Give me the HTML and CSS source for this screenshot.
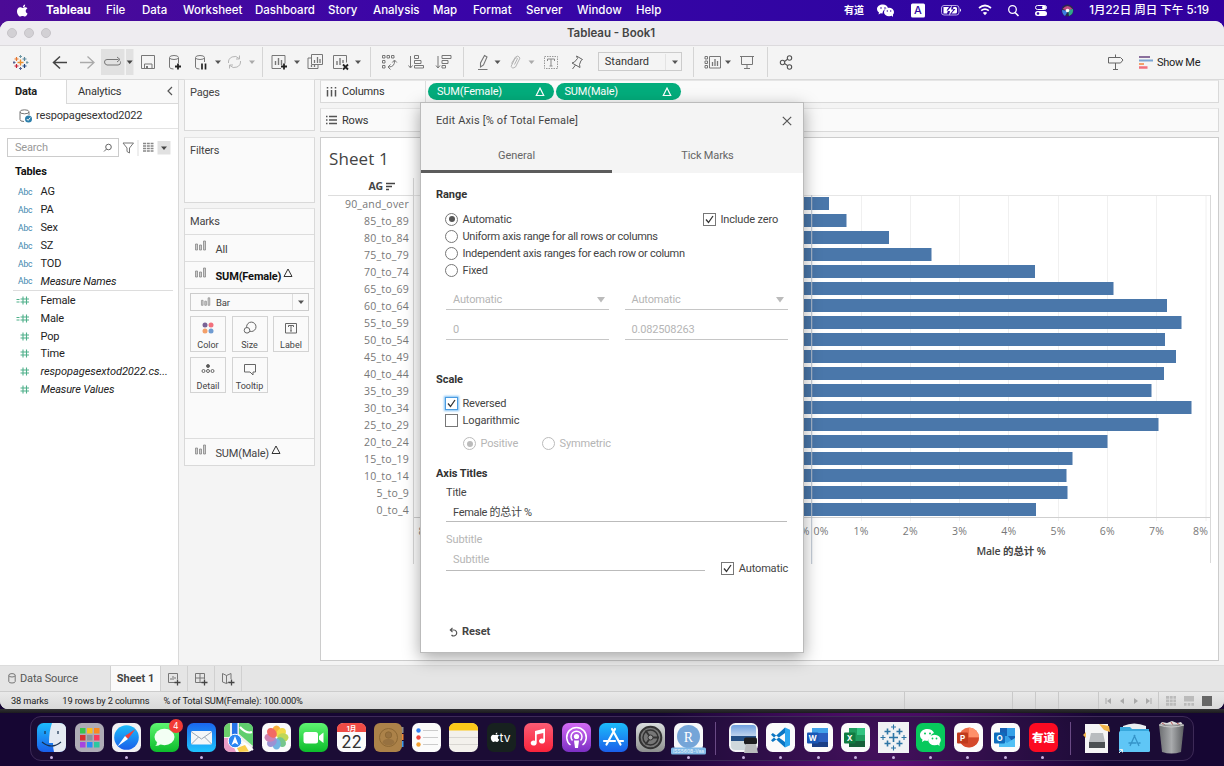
FILE: index.html
```html
<!DOCTYPE html>
<html lang="zh">
<head>
<meta charset="utf-8">
<title>Tableau - Book1</title>
<link rel="stylesheet" href="styles.css">
</head>
<body>
<svg class="defs" width="0" height="0">
  <defs>
    <path id="caret" d="M-3 -1.5h6l-3 3.5z"/>
    <g id="plus" stroke="#222" stroke-width="1.8"><path d="M-3 0h6M0 -3v6"/></g>
    <g id="bars" fill="#ccc" stroke="#888" stroke-width=".8"><path d="M.5 4h2v6h-2zM4.5 5h2v5h-2zM8.500 1h2v9h-2z"/></g>
    <g id="hash" stroke="#4fb08a" stroke-width="1.1" fill="none"><path d="M3 .5v8M6.500 .5v8M.5 3h8.500M.5 6h8.500"/></g>
    <path id="apple" d="M8.200 3c.8-.8 1-1.700 .9-2.500-1 .1-2 .9-2.200 2.400M9 3.300c-1 0-1.700.6-2.400.6S5 3.300 4.100 3.300C2.300 3.400 1 5 1 7.200 1 9.700 2.700 12.500 4.100 12.500c.9 0 1.300-.6 2.400-.6s1.400.6 2.400.6c1.200 0 2.300-2 2.600-3.100-2.300-1-2.300-3.900-.1-5C10.800 3.600 10 3.300 9 3.300z"/>
    <linearGradient id="gGray" x2="0" y2="1"><stop stop-color="#d9dddd"/><stop offset="1" stop-color="#8d8f8e"/></linearGradient>
    <linearGradient id="gBlue" x2="0" y2="1"><stop stop-color="#1cbcfb"/><stop offset="1" stop-color="#1a5fea"/></linearGradient>
    <linearGradient id="gMail" x2="0" y2="1"><stop stop-color="#1b66ee"/><stop offset="1" stop-color="#1fc4fd"/></linearGradient>
    <linearGradient id="gGreen" x2="0" y2="1"><stop stop-color="#5ef571"/><stop offset="1" stop-color="#0cbc2b"/></linearGradient>
    <linearGradient id="gRed" x2="0" y2="1"><stop stop-color="#fb5c74"/><stop offset="1" stop-color="#fa233b"/></linearGradient>
    <linearGradient id="gPurple" x2="0" y2="1"><stop stop-color="#d36bf5"/><stop offset="1" stop-color="#7c2fc4"/></linearGradient>
    <linearGradient id="gTrash" x2="1" y2="0"><stop stop-color="#6d6f72"/><stop offset=".5" stop-color="#a9abad"/><stop offset="1" stop-color="#5b5d60"/></linearGradient>
    <linearGradient id="gSky" x2="0" y2="1"><stop stop-color="#6f9fe0"/><stop offset="1" stop-color="#d5e2f1"/></linearGradient>
  </defs>
</svg>

<header class="menubar">
  <nav class="menus">
    <svg class="apple" width="13" height="13" fill="#fff"><use href="#apple"/></svg>
    <b class="m1">Tableau</b><span class="m2">File</span><span class="m3">Data</span><span class="m4">Worksheet</span><span class="m5">Dashboard</span><span class="m6">Story</span><span class="m7">Analysis</span><span class="m8">Map</span><span class="m9">Format</span><span class="m10">Server</span><span class="m11">Window</span><span class="m12">Help</span>
  </nav>
  <div class="tray">
    <b class="youdao">有道</b>
    <svg class="trayicons" width="220" height="20" viewBox="870 0 220 20" fill="#fff">
      <path d="M883 4.500c-3.500 0-6 2-6 4.500 0 1.500.8 2.600 2 3.400l-.5 2 2.200-1.200 1.900.3c0-3 2.400-5 5.600-5C887.500 6 885.500 4.500 883 4.500z"/><ellipse cx="889" cy="12" rx="5" ry="4.300"/><path d="M891 15l2 2v-3z"/><g fill="#3406a4"><circle cx="881" cy="8" r=".8"/><circle cx="885" cy="8" r=".8"/><circle cx="887.300" cy="11" r=".7"/><circle cx="890.700" cy="11" r=".7"/></g>
      <rect x="911" y="3.500" width="14" height="14" rx="1.500"/><text x="918" y="14.300" text-anchor="middle" font-size="11" fill="#3406a4">A</text>
      <rect x="941.500" y="5.500" width="17.500" height="9.500" rx="2.500" fill="none" stroke="#b9a8e5"/><path d="M943.500 7h5.500l-2.500 3.500h1.500l-1 3h-3.500zM953.500 7h2q1.500 0 1.500 1.500v3.500q0 1.500-1.500 1.500h-4l4-4.500h-2.500zM952 5.500l-4.500 5.500h2.500l-1 4.500 4.500-6h-2.500zM960 8.500q2 1.500 0 3.500z"/>
      <g fill="none" stroke="#fff" stroke-width="1.700"><path d="M979 8q6-5 12 0M981.200 10.700q3.800-3 7.600 0"/></g><path d="M982.800 12.800q2.200-1.600 4.400 0L985 15.200z"/>
      <circle cx="1012.500" cy="9.500" r="3.800" fill="none" stroke="#fff" stroke-width="1.300"/><path d="M1015 12.500l3.500 3.500" stroke="#fff" stroke-width="1.600"/>
      <rect x="1035.500" y="5.500" width="11" height="4" rx="2" fill="none" stroke="#fff"/><circle cx="1044" cy="7.500" r="2"/><rect x="1035" y="11" width="12" height="5" rx="2.500"/><circle cx="1038" cy="13.500" r="1.300" fill="#3406a4"/>
      <circle cx="1067.500" cy="10.500" r="6" fill="#29294e"/><path d="M1062.500 9q5-6 10 0l-4 2z" fill="#c04a84"/><path d="M1062 10l6 1-3 5q-3-2-3-6z" fill="#3c7de0"/><path d="M1068 10l5-1q1 5-4 7z" fill="#31a58b"/><circle cx="1067.500" cy="10.500" r="1.800" fill="#fff"/>
    </svg>
    <span class="clock">1月22日 周日 下午 5:19</span>
  </div>
</header>

<div class="window">
  <div class="titlebar"><i></i><i></i><i></i><b>Tableau - Book1</b></div>

  <div class="toolbar">
    <svg class="tg" width="40" height="30" viewBox="0 47 40 30" fill="none" stroke-width="1.400">
      <path d="M20.500 59.500v6M17.500 62.500h6" stroke="#eb8f2d"/><path d="M16.500 64v4M14.500 66h4" stroke="#c72035" stroke-width="1.200"/><path d="M24.500 57v4M22.500 59h4" stroke="#59879b" stroke-width="1.200"/><path d="M16.500 57v4M14.500 59h4" stroke="#e8762b" stroke-width="1.200"/><path d="M24.500 64v4M22.500 66h4" stroke="#1f447e" stroke-width="1.200"/><path d="M20.500 55v3M19 56.500h3M26 62.500h2.500M27 61v3" stroke="#7099a5" stroke-width="1"/><path d="M20.500 67v3M19 68.500h3M13 62.500h2.500M14 61v3" stroke="#5b6591" stroke-width="1"/>
    </svg>
    <svg class="tg sep" width="222" height="30" viewBox="41 47 222 30" fill="none" stroke="#777">
      <rect x="101" y="49" width="23.500" height="26" fill="#e1e1e1" stroke="none"/><rect x="126" y="49" width="7.500" height="26" fill="#e1e1e1" stroke="none"/>
      <path d="M67 62.500H54M60 56.500l-6.500 6 6.500 6" stroke="#444" stroke-width="1.500"/>
      <path d="M80 62.500h13M87.500 56.500l6.500 6-6.500 6" stroke="#aaa" stroke-width="1.300"/>
      <path d="M118.500 59.500h-11.500q-2.500 0-2.500 2.500t2.500 3h11q2.500 0 2.500-2.500v-1M117 57l3 2.500-3 2.500" stroke="#777"/>
      <use href="#caret" x="129.700" y="62" fill="#444" stroke="none"/>
      <path d="M141.500 55.500h13v13h-13zM144.500 68.500v-4.500h7.500v4.500"/><path d="M146 66h2v2.500h-2z" fill="#777" stroke="none"/>
      <path d="M169.500 58v9q0 2 4 2M178.500 58v5"/><ellipse cx="174" cy="57.500" rx="4.500" ry="2"/><use href="#plus" x="178" y="66.500"/>
      <path d="M195.500 58v9q0 2 4 2M204.500 58v4"/><ellipse cx="200" cy="57.500" rx="4.500" ry="2"/><path d="M202 63.500v6M205.500 63.500v6" stroke="#222" stroke-width="1.700"/>
      <use href="#caret" x="218" y="62" fill="#555" stroke="none"/>
      <path d="M228.500 63a6 6 0 0 1 10.500-4.500M240.500 61a6 6 0 0 1-10.500 4.500M239.500 55.500v3.500h-3.500M229.500 68.500v-3.500h3.500" stroke="#b5b5b5"/>
      <use href="#caret" x="252" y="62" fill="#aaa" stroke="none"/>
    </svg>
    <svg class="tg sep" width="107" height="30" viewBox="264 47 107 30" fill="none" stroke="#777">
      <path d="M282 68.500h-9v-13h13v8"/><path d="M276.500 61v4M279.500 58v7M282.500 60v5" stroke-width="1.400"/><use href="#plus" x="285" y="66.500"/>
      <use href="#caret" x="298" y="62" fill="#555" stroke="none"/>
      <path d="M312.500 54.500h11v10h-11zM312 58h-3v10.500h10V65"/><path d="M315.500 60v3M318.500 57v6M321 59v4M312.500 65v2M315.500 65v2" stroke-width="1.300"/>
      <path d="M343 68.500h-8.500v-13h13v7"/><path d="M338 61v4M341 58v7M344 60v3" stroke-width="1.400"/><path d="M344 64.500l5 5M349 64.500l-5 5" stroke="#222" stroke-width="1.800"/>
      <use href="#caret" x="359" y="62" fill="#555" stroke="none"/>
    </svg>
    <svg class="tg sep" width="92" height="30" viewBox="371 47 92 30" fill="none" stroke="#777">
      <path d="M382.500 55.500h2.500v2.500h-2.500zM387 55.500h2.500v2.500H387zM391.500 55.500h2.500v2.500h-2.500zM382.500 60.500h2.500v2.500h-2.500zM382.500 65.500h2.500v2.500h-2.500zM394.500 60.500q.5 6.500-6 6.500M392.300 62.500l2.200-2.500 2.300 2.500M390.500 64.500l-2.500 2.500 2.500 2.500" stroke-width="1"/>
      <path d="M410.500 56v11.500M408.500 65.500l2 2.500 2-2.500M414.500 55.500h4v3h-4zM414.500 60.500h6.500v3h-6.500zM414.500 65.500h9v2.500h-9z"/>
      <path d="M438 56v11.500M436 65.500l2 2.500 2-2.500M442 55.500h9v3h-9zM442 60.500h6v3h-6zM442 65.500h3.500v2.500h-3.500z"/>
    </svg>
    <svg class="tg sep" width="134" height="30" viewBox="464 47 134 30" fill="none" stroke="#777">
      <path d="M484.500 55.500l2.500 1.500-3.500 8-3 2v-4zM478 69.500h9.500" stroke-width="1.100"/><use href="#caret" x="497.500" y="62" fill="#555" stroke="none"/>
      <path d="M511.500 63.500l4-6.500q2.500-2.500 4.500 1l-4.500 9q-3 2.500-4.500-.5l4-8q1.500-1.500 2.500 0l-3 6" stroke="#b5b5b5"/><use href="#caret" x="531.500" y="62" fill="#aaa" stroke="none"/>
      <rect x="544.500" y="56.500" width="13" height="12" stroke="#999" stroke-dasharray="1.500 1"/><path d="M547.500 61v-2h7v2M551 59v7M549.500 66h3" stroke="#888"/>
      <path d="M576.500 56l6 3.500-1.500 1-1.500 4 .5 3-8-4.500 2.500-1 3-3.500zM575.500 65l-3 4" stroke="#666"/>
    </svg>
    <div class="fit"><span>Standard</span><svg width="16" height="16"><use href="#caret" x="9" y="8" fill="#555"/></svg></div>
    <svg class="tg sep g6" width="73" height="30" viewBox="695 47 73 30" fill="none" stroke="#777">
      <path d="M706 56.500h2.500v2.500H706zM706 61h2.500v2.500H706zM706 65.500h2.500v2.500H706zM710.500 56.500h11v11.500h-11z"/><path d="M713.500 62v4M716 59v7M718.500 61v5" stroke-width="1.300"/><use href="#caret" x="729" y="62" fill="#555" stroke="none"/>
      <path d="M741 56.500h14M742.500 56.500v8h11v-8M748 64.500v4M745 68.500h6" />
    </svg>
    <svg class="tg sep" width="40" height="30" viewBox="769 47 40 30" fill="none" stroke="#555" stroke-width="1.100">
      <circle cx="783.500" cy="62.500" r="2.200"/><circle cx="790.500" cy="58" r="2.200"/><circle cx="790.500" cy="67" r="2.200"/><path d="M785.500 61.500l3-2.200M785.500 63.500l3 2"/>
    </svg>
    <svg class="showicons" width="50" height="30" viewBox="1105 47 50 30" fill="none" stroke="#666">
      <path d="M1108.500 57.500h12l2.500 2.500-2.500 3h-12zM1115.500 54.500v3M1115.500 63v6.500M1113 69.500h5"/>
      <path d="M1139 57h11" stroke="#8a6f9c" stroke-width="2"/><path d="M1139 60.500h14" stroke="#7ca5d2" stroke-width="2"/><path d="M1139 64h5" stroke="#f3a06a" stroke-width="2"/><path d="M1139 67.500h8.500" stroke="#f2707c" stroke-width="2.500"/>
    </svg>
    <span class="showme">Show Me</span>
  </div>

  <div class="work">
    <aside class="data">
      <div class="dtabs"><b>Data</b><div><span>Analytics</span><svg width="8" height="10" fill="none" stroke="#555" stroke-width="1.200"><path d="M6 1L2 5l4 4"/></svg></div></div>
      <div class="source"><svg width="14" height="14" fill="none" stroke="#777"><ellipse cx="5.500" cy="2.800" rx="4.500" ry="2"/><path d="M1 3v7.500q0 2 4 2M10 3v3"/><circle cx="9.500" cy="10" r="3.500" fill="#2d7fab" stroke="none"/><path d="M7.800 10l1.300 1.400 2.200-2.800" stroke="#fff"/></svg><span>respopagesextod2022</span></div>
      <div class="searchrow">
        <div class="search"><span>Search</span><svg width="10" height="10" fill="none" stroke="#666"><circle cx="5.500" cy="4" r="2.800"/><path d="M3.500 6L1 8.500"/></svg></div>
        <svg width="52" height="16" viewBox="121 139 52 16" fill="none" stroke="#777"><path d="M123 142h10.500l-4 5v5l-2.500-1.500V147z"/><path d="M138 139v16" stroke="#ddd"/><g stroke="#888" stroke-width="1.500" stroke-dasharray="3 .8"><path d="M143 142.500h10.500M143 145h10.500M143 147.500h10.500M143 150h10.500"/></g><rect x="157.500" y="140" width="13" height="13.500" fill="#e1e1e1" stroke="none"/><use href="#caret" x="164" y="147" fill="#444" stroke="none"/></svg>
      </div>
      <b class="tables">Tables</b>
      <ul class="fields">
        <li><em>Abc</em><span>AG</span></li><li><em>Abc</em><span>PA</span></li><li><em>Abc</em><span>Sex</span></li><li><em>Abc</em><span>SZ</span></li><li><em>Abc</em><span>TOD</span></li><li class="it"><em>Abc</em><span>Measure Names</span></li>
      </ul>
      <ul class="fields measures">
        <li><svg width="14" height="9"><use href="#hash" x="3"/><path d="M-.5 3.500h3M-.5 6h3" stroke="#4fb08a"/></svg><span>Female</span></li>
        <li><svg width="14" height="9"><use href="#hash" x="3"/><path d="M-.5 3.500h3M-.5 6h3" stroke="#4fb08a"/></svg><span>Male</span></li>
        <li><svg width="14" height="9"><use href="#hash" x="3"/></svg><span>Pop</span></li>
        <li><svg width="14" height="9"><use href="#hash" x="3"/></svg><span>Time</span></li>
        <li class="it"><svg width="14" height="9"><use href="#hash" x="3"/></svg><span class="full">respopagesextod2022.cs...</span></li>
        <li class="it"><svg width="14" height="9"><use href="#hash" x="3"/></svg><span>Measure Values</span></li>
      </ul>
    </aside>

    <section class="cards">
      <div class="card pages">Pages</div>
      <div class="card filters">Filters</div>
      <div class="card marks">
        <div class="mtitle">Marks</div>
        <div class="mrow"><svg width="12" height="12"><use href="#bars"/></svg><span>All</span></div>
        <div class="mrow sel"><svg width="12" height="12"><use href="#bars"/></svg><b>SUM(Female)</b><svg class="tri" width="10" height="10" fill="none" stroke="#333"><path d="M5 1l4 7.500H1z"/></svg></div>
        <div class="mark-body">
          <div class="marktype"><svg width="10" height="10" viewBox="0 0 12 12"><use href="#bars"/></svg><span>Bar</span><svg class="dd" width="16" height="16"><use href="#caret" x="8" y="8" fill="#555"/></svg></div>
          <div class="shelf">
            <div><svg width="14" height="14"><circle cx="4" cy="4" r="2.500" fill="#7a6396"/><circle cx="10" cy="4" r="2.500" fill="#f2707c"/><circle cx="4" cy="10" r="2.500" fill="#f3a06a"/><circle cx="10" cy="10" r="2.500" fill="#6f9bd1"/></svg>Color</div>
            <div><svg width="14" height="14" fill="none" stroke="#666"><circle cx="8.300" cy="5.800" r="4.700"/><circle cx="4" cy="9.300" r="2.800" fill="#fafafa"/></svg>Size</div>
            <div><svg width="14" height="14" fill="none" stroke="#666"><path d="M1.500 2.500h11v9.500h-11zM4.500 6V4.500h5V6M7 4.500V10M6 10h2"/></svg>Label</div>
            <div><svg width="14" height="14" fill="none" stroke="#666"><circle cx="7" cy="4" r="1.500" fill="#555"/><circle cx="2.500" cy="9" r="1.500"/><circle cx="7" cy="9" r="1.500"/><circle cx="11.500" cy="9" r="1.500"/></svg>Detail</div>
            <div><svg width="14" height="14" fill="none" stroke="#666"><path d="M1.500 2.500h11v7.500H10v3l-3-3H1.500z"/></svg>Tooltip</div>
          </div>
        </div>
        <div class="mrow last"><svg width="12" height="12"><use href="#bars"/></svg><span>SUM(Male)</span><svg class="tri" width="10" height="10" fill="none" stroke="#333"><path d="M5 1l4 7.500H1z"/></svg></div>
      </div>
    </section>

    <main class="view">
      <div class="rowshelf cols"><div class="sh"><svg width="11" height="10" stroke="#555" stroke-width="1.500"><path d="M1.500 0v1.500M5.500 0v1.500M9.500 0v1.500M1.500 3v6.500M5.500 3v6.500M9.500 3v6.500"/></svg><span>Columns</span></div>
        <div class="pill"><span>SUM(Female)</span><svg width="10" height="10" fill="none" stroke="#fff" stroke-width="1.200"><path d="M5 1l3.700 7.500H1.300z"/></svg></div><div class="pill"><span>SUM(Male)</span><svg width="10" height="10" fill="none" stroke="#fff" stroke-width="1.200"><path d="M5 1l3.700 7.500H1.300z"/></svg></div></div>
      <div class="rowshelf rows"><div class="sh"><svg width="11" height="10" stroke="#555" stroke-width="1.500"><path d="M0 1.500h1.500M3 1.500h8M0 5h1.500M3 5h8M0 8.500h1.500M3 8.500h8"/></svg><span>Rows</span></div></div>
      <div class="sheet">
        <h1>Sheet 1</h1>
        <div class="chart">
          <div class="ylabels">
            <div class="ag"><b>AG</b><svg width="9" height="9" stroke="#444" stroke-width="1.400"><path d="M0 1.500h9M0 4.500h6M0 7.500h3"/></svg></div>
            <p>90_and_over</p><p>85_to_89</p><p>80_to_84</p><p>75_to_79</p><p>70_to_74</p><p>65_to_69</p><p>60_to_64</p><p>55_to_59</p><p>50_to_54</p><p>45_to_49</p><p>40_to_44</p><p>35_to_39</p><p>30_to_34</p><p>25_to_29</p><p>20_to_24</p><p>15_to_19</p><p>10_to_14</p><p>5_to_9</p><p>0_to_4</p>
          </div>
          <svg class="plot" width="799" height="387" viewBox="413 178 799 387">
            <g stroke="#f0f0f0"><path d="M861.500 195v326M910.500 195v326M959.500 195v326M1008.500 195v326M1058.500 195v326M1107.500 195v326M1156.500 195v326M1206 195v326"/></g>
            <g fill="#4a77aa">
              <path d="M600 197h229v13H600zM600 214h246.500v13H600zM600 231h289v13H600zM600 248h331.500v13H600zM600 265h435v13H600zM600 282h513.500v13H600zM600 299h567v13H600zM600 316h581.500v13H600zM600 333h565v13H600zM600 350h576v13H600zM600 367h564v13H600zM600 384h551.500v13H600zM600 401h591.500v13H600zM600 418h558.500v13H600zM600 435h507.500v13H600zM600 452h472.500v13H600zM600 469h466.500v13H600zM600 486h467.500v13H600zM600 503h436v13H600z"/>
            </g>
            <path d="M413 195.500h798" stroke="#e6e6e6"/><path d="M413 517.500h798" stroke="#cfcfcf"/>
            <path d="M413.500 178v386M1210.500 195v368" stroke="#d9d9d9"/><path d="M811.700 195v369" stroke="#b9c3d0"/>
            <g class="ticks" text-anchor="middle"><text x="426" y="535">8%</text><text x="802" y="535">0%</text><text x="821" y="535">0%</text><text x="861" y="535">1%</text><text x="910.300" y="535">2%</text><text x="959.500" y="535">3%</text><text x="1008.800" y="535">4%</text><text x="1058" y="535">5%</text><text x="1107.300" y="535">6%</text><text x="1156.500" y="535">7%</text><text x="1200.500" y="535">8%</text></g>
            <text class="axt" x="1011" y="555" text-anchor="middle">Male 的总计 %</text>
          </svg>
        </div>
      </div>
    </main>
  </div>

  <footer class="tabs">
    <div class="ds"><svg width="9" height="11" fill="none" stroke="#777"><ellipse cx="4" cy="2.300" rx="3.200" ry="1.700"/><path d="M.8 2.500v6q0 1.500 3.200 1.500t3.200-1.500v-6"/></svg><span>Data Source</span></div>
    <div class="cur"><b>Sheet 1</b></div>
    <div class="nt"><svg width="14" height="14" fill="none" stroke="#777"><path d="M8 10.500H1.500v-9h9V7M4 6v2M6 4v4M8 5v2"/><path d="M7.500 10.500h6M10.500 7.500v6" stroke="#444" stroke-width="1.300"/></svg></div>
    <div class="nt"><svg width="14" height="14" fill="none" stroke="#777"><path d="M8 10.500H1.500v-9h9V7M1.500 6h9M6 1.500v9"/><path d="M7.500 10.500h6M10.500 7.500v6" stroke="#444" stroke-width="1.300"/></svg></div>
    <div class="nt"><svg width="14" height="14" fill="none" stroke="#777"><path d="M5.500 3.500v8L1.500 10V1.500zM5.500 3.500l4.500-2V7M5.500 11.500L8 10"/><path d="M7.500 10.500h6M10.500 7.500v6" stroke="#444" stroke-width="1.300"/></svg></div>
  </footer>
  <div class="status"><span>38 marks</span><span>19 rows by 2 columns</span><span>% of Total SUM(Female): 100.000%</span>
    <svg width="320" height="18" viewBox="904 691 320 18" fill="#aaa"><path d="M904.500 691v18M1012.500 691v18M1035.500 691v18M1058.500 691v18M1098.500 691v18M1158.500 691v18" stroke="#c9c9c9"/><path d="M1105.500 697h1v6h-1zM1111 697v6l-4-3zM1124 697v6l-4-3zM1134 697v6l4-3zM1146 697v6l4-3zM1150.500 697h1v6h-1z"/><path d="M1166 695h3v2.700h-3zM1169.700 695h3v2.700h-3zM1173.400 695h2.600v2.700h-2.600zM1166 698.500h3v2.700h-3zM1169.700 698.500h3v2.700h-3zM1173.400 698.500h2.600v2.700h-2.600zM1166 702h3v2.700h-3zM1169.700 702h3v2.700h-3zM1173.400 702h2.600v2.700h-2.600zM1184 695h10v5.500h-10zM1184 702h2.600v2.700H1184zM1187.700 702h2.600v2.700h-2.600zM1191.400 702h2.600v2.700h-2.600z" fill="#bbb"/><rect x="1202" y="695" width="10" height="10" fill="#666"/></svg>
  </div>
</div>

<div class="dockwrap">
  <div class="dock">
    <div class="app run"><svg viewBox="0 0 29 29"><rect width="29" height="29" rx="6.500" fill="url(#gBlue)"/><path d="M15 0h7.500Q29 0 29 6.500v16Q29 29 22.500 29H17q-1-4-1-9h-4q0-12 3-20z" fill="#e4eaf2"/><path d="M8 8v3M21 8v3M5 19q9.500 8 19 0" stroke="#18304f" stroke-width="1.200" fill="none"/></svg></div>
    <div class="app"><svg viewBox="0 0 29 29"><rect width="29" height="29" rx="6.500" fill="#aeacb6"/><path fill="#3ac44e" d="M5 5h5.500v5.500H5z"/><path fill="#fbbd1b" d="M12 5h5.500v5.500H12z"/><path fill="#fb8a20" d="M19 5h5.500v5.500H19z"/><path fill="#d8302f" d="M5 12h5.500v5.500H5z"/><path fill="#8e9298" d="M12 12h5.500v5.500H12z"/><path fill="#fb3a5e" d="M19 12h5.500v5.500H19z"/><path fill="#a544e0" d="M5 19h5.500v5.500H5z"/><path fill="#2b8ef5" d="M12 19h5.500v5.500H12z"/><path fill="#2cc8a0" d="M19 19h5.500v5.500H19z"/></svg></div>
    <div class="app run"><svg viewBox="0 0 29 29"><rect width="29" height="29" rx="6.500" fill="#f1f1f3"/><circle cx="14.500" cy="14.500" r="12.300" fill="url(#gBlue)"/><path d="M23.500 6L13 13l3 3z" fill="#f3403b"/><path d="M5.500 23.500L13 13l3 3z" fill="#fff"/></svg></div>
    <div class="app"><svg viewBox="0 0 29 29"><rect width="29" height="29" rx="6.500" fill="url(#gGreen)"/><ellipse cx="14.500" cy="14" rx="10" ry="8.300" fill="#f3fff4"/><path d="M7 19q0 3-2 4 4 0 6-2z" fill="#f3fff4"/></svg><span class="badge">4</span></div>
    <div class="app run"><svg viewBox="0 0 29 29"><rect width="29" height="29" rx="6.500" fill="url(#gMail)"/><rect x="4" y="8" width="21" height="13.500" rx="1.500" fill="#f4f6f8"/><path d="M4.500 9l10 7 10-7M4.500 21l7-7M24.500 21l-7-7" stroke="#9aa6b5" fill="none"/></svg></div>
    <div class="app"><svg viewBox="0 0 29 29"><rect width="29" height="29" rx="6.500" fill="#eef0ea"/><path d="M0 15v7.500Q0 29 6.500 29H12V15z" fill="#e99bc5"/><path d="M8 0h6v14l15 12q-2 3-6.500 3H12L8 20z" fill="#fbfbfb"/><path d="M19 0h3.500Q29 0 29 6.500V23L15 11V0z" fill="#5fce6e"/><path d="M0 6.500Q0 1 6 0v14H0z" fill="#6bcf6a"/><path d="M8 0h5.500v15H8z" fill="#2672e8"/><path d="M20 20l9 7M16 4q6 7 12 5" stroke="#fff" stroke-width="2" fill="none"/><path d="M15 29l-2-4 8-3 4 6.500z" fill="#f9cd4a"/><circle cx="11" cy="18" r="6.800" fill="#2b86f2" stroke="#fff"/><path d="M11 13l3.500 9-3.500-2-3.500 2z" fill="#fff"/></svg></div>
    <div class="app"><svg viewBox="0 0 29 29"><rect width="29" height="29" rx="6.500" fill="#fbfbfb"/><g opacity=".85"><ellipse cx="14.500" cy="8" rx="4.200" ry="5.500" fill="#f9a51c"/><ellipse cx="14.500" cy="8" rx="4.200" ry="5.500" fill="#f1d529" transform="rotate(45 14.500 14.500)"/><ellipse cx="14.500" cy="8" rx="4.200" ry="5.500" fill="#b5d13a" transform="rotate(90 14.500 14.500)"/><ellipse cx="14.500" cy="8" rx="4.200" ry="5.500" fill="#5ebd79" transform="rotate(135 14.500 14.500)"/><ellipse cx="14.500" cy="8" rx="4.200" ry="5.500" fill="#5aa9dd" transform="rotate(180 14.500 14.500)"/><ellipse cx="14.500" cy="8" rx="4.200" ry="5.500" fill="#8a80cd" transform="rotate(225 14.500 14.500)"/><ellipse cx="14.500" cy="8" rx="4.200" ry="5.500" fill="#c76ca5" transform="rotate(270 14.500 14.500)"/><ellipse cx="14.500" cy="8" rx="4.200" ry="5.500" fill="#f1504a" transform="rotate(315 14.500 14.500)"/></g></svg></div>
    <div class="app"><svg viewBox="0 0 29 29"><rect width="29" height="29" rx="6.500" fill="url(#gGreen)"/><rect x="4.500" y="9" width="14.500" height="11.500" rx="2.500" fill="#fff"/><path d="M20 13l4.500-3.500v10.500L20 16.500z" fill="#fff"/></svg></div>
    <div class="app"><svg viewBox="0 0 29 29"><rect width="29" height="29" rx="6.500" fill="#fbfbfb"/><path d="M0 9V6.500Q0 0 6.500 0h16Q29 0 29 6.500V9z" fill="#f04b45"/><text x="14.500" y="7.500" font-size="6.500" font-weight="bold" text-anchor="middle" fill="#fff">1月</text><text x="14.500" y="24.500" font-size="17" text-anchor="middle" fill="#333">22</text></svg></div>
    <div class="app"><svg viewBox="0 0 29 29"><path d="M26 4h3.500v6H26z" fill="#8c8c8c"/><path d="M26 11h3.500v6H26z" fill="#f0883a"/><path d="M26 18h3.500v6H26z" fill="#3f9bea"/><rect width="28" height="29" rx="6" fill="#ac8249"/><g fill="none" stroke="#8d6834"><circle cx="14.500" cy="14.500" r="9"/><circle cx="14.500" cy="12" r="3.200" fill="#977140"/></g><path d="M8.500 20q0-4 6-4t6 4q-6 5-12 0z" fill="#977140"/></svg></div>
    <div class="app"><svg viewBox="0 0 29 29"><rect width="29" height="29" rx="6.500" fill="#fbfbfb"/><circle cx="6.500" cy="7.500" r="2.200" fill="#3080f5"/><circle cx="6.500" cy="14.500" r="2.200" fill="#f2453d"/><circle cx="6.500" cy="21.500" r="2.200" fill="#f3a032"/><path d="M11 7.500h15M11 14.500h15M11 21.500h15" stroke="#ccc"/></svg></div>
    <div class="app"><svg viewBox="0 0 29 29"><rect width="29" height="29" rx="6.500" fill="#f3f1ec"/><path d="M0 7.500v-1Q0 0 6.500 0h16Q29 0 29 6.500v1z" fill="#fdc919"/><path d="M0 14.500h29M0 21.500h29" stroke="#d8d6d1"/></svg></div>
    <div class="app"><svg viewBox="0 0 29 29"><rect width="29" height="29" rx="6.500" fill="#17211f"/><use href="#apple" transform="translate(3 9) scale(.8)" fill="#fff"/><text x="12.500" y="19" font-size="12" fill="#fff">tv</text></svg></div>
    <div class="app"><svg viewBox="0 0 29 29"><rect width="29" height="29" rx="6.500" fill="url(#gRed)"/><path d="M11 8l10-2.500v12.500a3 2.500 0 1 1-1.700-2.200V10l-6.600 1.600V20A3 2.500 0 1 1 11 17.800z" fill="#fff"/></svg></div>
    <div class="app"><svg viewBox="0 0 29 29"><rect width="29" height="29" rx="6.500" fill="url(#gPurple)"/><g fill="none" stroke="#fff" stroke-width="1.500"><path d="M8.500 22a9.800 9.800 0 1 1 12 0M10.500 17.500a5.500 5.500 0 1 1 8 0"/></g><circle cx="14.500" cy="13.500" r="2.600" fill="#fff"/><path d="M12 17.500h5l-1 7.500h-3z" fill="#fff"/></svg></div>
    <div class="app"><svg viewBox="0 0 29 29"><rect width="29" height="29" rx="6.500" fill="url(#gBlue)"/><path d="M16 6L7.500 21.500M13 6l8.500 15.500M5 18h11M19.500 18H24" stroke="#fff" stroke-width="2.200" stroke-linecap="round"/></svg></div>
    <div class="app"><svg viewBox="0 0 29 29"><rect width="29" height="29" rx="6.500" fill="url(#gGray)"/><circle cx="14.500" cy="14.500" r="10.800" fill="#777" stroke="#333" stroke-width="2"/><circle cx="14.500" cy="14.500" r="7.500" fill="none" stroke="#333" stroke-width="1.500"/><path d="M14.500 14.500H23M14.500 14.500l-5-7M14.500 14.500l-5 7" stroke="#333" stroke-width="1.800"/><circle cx="14.500" cy="14.500" r="2.500" fill="#999" stroke="#333"/></svg></div>
    <div class="app run"><svg viewBox="0 0 29 29"><rect width="29" height="29" rx="6.500" fill="#f7f8fa"/><circle cx="14.500" cy="13.500" r="11.500" fill="#75a5d8"/><text class="serif" x="14.500" y="18.500" font-size="14" text-anchor="middle" fill="#fff">R</text><rect x="-3" y="24.500" width="35" height="7" rx="1.500" fill="#7fb8e6"/><text x="14.500" y="30" font-size="5" text-anchor="middle" fill="#e9f4fd">ISS5608-Vaa</text></svg></div>
    <hr>
    <div class="app run"><svg viewBox="0 0 29 29"><rect width="29" height="29" rx="6.500" fill="#f4f5f7"/><rect x="2" y="2" width="25" height="14" rx="3" fill="url(#gSky)"/><path d="M2 13h25v5H2z" fill="#244f85"/><path d="M2 18h25v5q0 4-4 4H6q-4 0-4-4z" fill="#cfd8dc"/><rect x="15" y="14.500" width="13" height="7" rx="2" fill="#1d1d1f"/><path d="M17 21h10l2 9H15z" fill="#b9bbbd"/></svg></div>
    <div class="app run"><svg viewBox="0 0 29 29"><rect width="29" height="29" rx="6.500" fill="#fbfbfb"/><path d="M19 4.500l5 2.200v15.600l-5 2.200z" fill="#2aa5ef"/><path d="M19 4.500L5 17.300l1.800 1.700L19 10zM19 24.500L5 11.700 6.800 10 19 19z" fill="#0b76c4"/></svg></div>
    <div class="app run"><svg viewBox="0 0 29 29"><rect width="29" height="29" rx="6.500" fill="#fbfbfb"/><path d="M8 5h16v19H8z" fill="#2b5fc0"/><path d="M8 5h16v5H8z" fill="#41a1ea"/><path d="M8 19h16v5H8z" fill="#1a3f86"/><rect x="3" y="9.500" width="11.500" height="11" rx="1" fill="#1857b5"/><text x="8.700" y="18" font-size="8" font-weight="bold" text-anchor="middle" fill="#fff">W</text></svg></div>
    <div class="app run"><svg viewBox="0 0 29 29"><rect width="29" height="29" rx="6.500" fill="#fbfbfb"/><path d="M8 5h16v19H8z" fill="#1f9d5f"/><path d="M16 5h8v7h-8z" fill="#33c481"/><path d="M8 18h16v6H8z" fill="#17603a"/><rect x="3" y="9.500" width="11.500" height="11" rx="1" fill="#107c41"/><text x="8.700" y="18" font-size="8" font-weight="bold" text-anchor="middle" fill="#fff">X</text></svg></div>
    <div class="app run"><svg viewBox="0 0 29 29"><rect x="-1" y="-1" width="31" height="31" fill="#f1f2f4"/><g stroke="#2e75a5" stroke-width="1.600"><path d="M14.500 10v9M10 14.500h9M8.500 5.500v6M5.500 8.500h6M20.500 5.500v6M17.500 8.500h6M8.500 17.500v6M5.500 20.500h6M20.500 17.500v6M17.500 20.500h6"/><path d="M14.500 1.500v5M12 4h5M14.500 22.500v5M12 25h5M4 12v5M1.500 14.500h5M25 12v5M22.500 14.500h5" stroke-width="1.100"/></g></svg></div>
    <div class="app run"><svg viewBox="0 0 29 29"><rect width="29" height="29" rx="6.500" fill="#07c95c"/><path d="M11.500 6C7 6 4 8.700 4 12c0 2 1 3.500 2.500 4.500L6 19l2.500-1.500 3 .5L16 11l2-1c-1-2.500-3.500-4-6.500-4z" fill="#fff"/><ellipse cx="18.500" cy="17" rx="6.300" ry="5.200" fill="#fff"/><path d="M21 21l2.500 2v-4z" fill="#fff"/><g fill="#07c95c"><circle cx="9" cy="10.500" r="1"/><circle cx="14" cy="10.500" r="1"/><circle cx="16.500" cy="15.500" r=".9"/><circle cx="20.500" cy="15.500" r=".9"/></g></svg></div>
    <div class="app run"><svg viewBox="0 0 29 29"><rect width="29" height="29" rx="6.500" fill="#fbfbfb"/><circle cx="15" cy="14.500" r="10" fill="#ee6b47"/><path d="M15 4.500a10 10 0 0 1 10 10H15z" fill="#ff9069"/><path d="M5 14.500h20a10 10 0 0 1-18.500 5z" fill="#d4482a"/><rect x="3" y="9.500" width="11" height="11" rx="1" fill="#c03a1c"/><text x="8.500" y="18" font-size="8" font-weight="bold" text-anchor="middle" fill="#fff">P</text></svg></div>
    <div class="app run"><svg viewBox="0 0 29 29"><rect width="29" height="29" rx="6.500" fill="#fbfbfb"/><path d="M9 5h15v17H9z" fill="#35a0e8"/><path d="M9 5h7v8H9zM17 13h7v9z" fill="#1660b5"/><path d="M8 15l8 5 8-5v9H8z" fill="#51c0f5"/><rect x="3" y="9.500" width="11" height="11" rx="1" fill="#0f6cbd"/><text x="8.500" y="18" font-size="8" font-weight="bold" text-anchor="middle" fill="#fff">O</text></svg></div>
    <div class="app run"><svg viewBox="0 0 29 29"><rect width="29" height="29" rx="6.500" fill="#fc0b22"/><text x="14.500" y="19" font-size="11.500" font-weight="900" text-anchor="middle" fill="#fff">有道</text></svg></div>
    <hr class="second">
    <div class="app"><svg viewBox="0 0 29 29"><path d="M3 1h23v29H3z" fill="#f5f5f5"/><path d="M1 12l3-3v6zM17 1l10 2 1 6-6-2z" fill="#f3b54c"/><path d="M9 10h12l2 9H7z" fill="#b9bcbf"/><path d="M7 19h16v6H7z" fill="#4c5053"/></svg></div>
    <div class="app"><svg viewBox="0 0 29 29"><path d="M3 3q11-5 23 0v8H3z" fill="#e9eef1"/><path d="M0 4h10l2 2h17v4H0z" fill="#37a7dc"/><rect x="-1" y="8" width="31" height="21" rx="1.500" fill="#5fc6f6"/><path d="M15 12l-5 11M14 12l5 11M8.500 20h8M18.500 20h2" stroke="#3493c8" stroke-width="1.300"/><path d="M-1 30l3-3M-.5 26.500H2.500v3" stroke="#eee" fill="none"/></svg></div>
    <div class="app"><svg viewBox="0 0 29 29"><path d="M2 2l3-3 5 1 5-2 5 2 4-1 3 4z" fill="#ddd"/><path d="M5 0l3 2M14-1l2 3M20 0l3 2" stroke="#b55"/><path d="M2 1.500h25L24 29q-9.500 3-19 0z" fill="url(#gTrash)"/><path d="M2 2q12.500 4 25 0" stroke="#ccc" fill="none"/></svg></div>
  </div>
</div>

<div class="dialog">
  <div class="dhead"><span>Edit Axis [% of Total Female]</span><svg width="10" height="10" stroke="#555" stroke-width="1.200"><path d="M.8 .8l8.400 8.400M9.200 .8L.8 9.200"/></svg></div>
  <div class="dnav"><span class="on">General</span><span>Tick Marks</span></div>
  <div class="dbody">
    <h2>Range</h2>
    <div class="split">
      <div class="opts">
        <label><i class="radio on"></i>Automatic</label><label><i class="radio"></i><span class="long">Uniform axis range for all rows or columns</span></label><label><i class="radio"></i><span class="long">Independent axis ranges for each row or column</span></label><label><i class="radio"></i>Fixed</label>
      </div>
      <label class="zero"><svg class="check" width="13" height="13"><path d="M3 6.500l2.500 3L10 3"/></svg>Include zero</label>
    </div>
    <div class="pair sel"><div>Automatic<svg width="8" height="6"><path d="M0 0h8L4 5.500z" fill="#bbb"/></svg></div><div>Automatic<svg width="8" height="6"><path d="M0 0h8L4 5.500z" fill="#bbb"/></svg></div></div>
    <div class="pair"><div>0</div><div>0.082508263</div></div>
    <h2 class="scale">Scale</h2>
    <div class="opts">
      <label><svg class="check focus" width="13" height="13"><path d="M3 6.500l2.500 3L10 3"/></svg>Reversed</label><label><svg class="check" width="13" height="13"></svg>Logarithmic</label>
    </div>
    <div class="sub"><label><i class="radio on"></i>Positive</label><label><i class="radio"></i>Symmetric</label></div>
    <h2 class="at">Axis Titles</h2>
    <div class="lab">Title</div>
    <div class="inp">Female 的总计 %</div>
    <div class="lab dim">Subtitle</div>
    <div class="last"><div class="inp dim">Subtitle</div><label><svg class="check" width="13" height="13"><path d="M3 6.500l2.500 3L10 3"/></svg>Automatic</label></div>
    <div class="reset"><svg width="9" height="10" fill="none" stroke="#555" stroke-width="1.200"><path d="M1.500 3h3.500a3 3 0 1 1-2.500 5M3.500 .8L1.300 3l2.200 2.200"/></svg><b>Reset</b></div>
  </div>
</div>
</body>
</html>
```

FILE: styles.css
```css
* { box-sizing: border-box; margin: 0; padding: 0; }
body {
  width: 1224px; height: 766px; overflow: hidden; position: relative;
  font: 11px/17px Roboto, "Noto Sans CJK SC", sans-serif; letter-spacing: -.16px; color: #333; white-space: nowrap;
  background: radial-gradient(ellipse 230px 110px at 880px 750px, #640f7e, transparent), #160633;
}
svg { display: block; flex: none; overflow: visible; }
.defs { position: absolute; }
ul { list-style: none; }
em { font-style: normal; }
.menubar { height: 30px; margin-bottom: -9px; display: flex; justify-content: space-between; color: #fff; letter-spacing: 0; font: 500 11.5px/21px Inter, "Noto Sans CJK SC", sans-serif; background: linear-gradient(90deg, #4c0b96, #3a05a8 35%, #3005a2 70%, #32009e); }
.menus, .tray { display: flex; height: 20px; }
.menus span, .menus b { flex: none; }
.apple { margin: 4px 0 0 16px; width: 30px; }
.m1 { width: 60px; } .m2 { width: 36px; } .m3 { width: 41px; } .m4 { width: 72px; } .m5 { width: 73px; } .m6 { width: 45px; }
.m7 { width: 60px; } .m8 { width: 40px; } .m9 { width: 53px; } .m10 { width: 51px; } .m11 { width: 59px; }
.tray { padding-right: 15px; }
.youdao { font-size: 10px; width: 26px; }
.clock { width: 122px; font-size: 11.5px; text-align: right; }
.trayicons { margin-right: -3px; }
.window { height: 688px; background: #f4f4f4; border-radius: 9px 9px 8px 8px; overflow: hidden; position: relative; display: flex; flex-direction: column; }
.titlebar { height: 25px; background: #eeecf0; border-bottom: 1px solid #dcdadd; display: flex; align-items: center; padding-left: 7px; gap: 7px; flex: none; }
.titlebar i { width: 10px; height: 10px; border-radius: 50%; background: #d2d0d4; border: 1px solid #c5c3c7; }
.titlebar b { flex: 1; text-align: center; padding-right: 68px; padding-left: 8px; font: 600 11.5px/20px Inter, sans-serif; letter-spacing: 0; color: #444; }
.toolbar { height: 34px; flex: none; border-bottom: 1px solid #dadada; display: flex; align-items: flex-start; padding-top: 1px; }
.tg.sep { border-left: 1px solid #d5d5d5; box-sizing: content-box; margin-left: -.3px; }
.fit { width: 84px; height: 19px; margin-top: 5px; border: 1px solid #ccc; display: flex; justify-content: space-between; align-items: center; padding-left: 6px; flex: none; letter-spacing: 0; }
.fit svg { border-left: 1px solid #e3e3e3; }
.tg.g6 { margin-left: 11.500px; }
.showicons { margin-left: auto; }
.showme { width: 69px; padding-left: 2px; line-height: 31px; color: #222; letter-spacing: -.3px; }
.work { height: 585px; flex: none; display: flex; }
.data { width: 179px; background: #fff; border-right: 1px solid #d9d9d9; flex: none; }
.dtabs { height: 24px; display: flex; }
.dtabs b { width: 66px; padding-left: 15px; line-height: 23px; color: #222; }
.dtabs div { flex: 1; background: #f9f9f9; border: solid #d9d9d9; border-width: 0 0 1px 1px; display: flex; justify-content: space-between; align-items: center; padding: 0 4px 1px 11px; }
.source { height: 25px; border-bottom: 1px solid #e3e3e3; display: flex; align-items: center; padding: 0 0 1px 19px; gap: 3px; }
.searchrow { display: flex; align-items: center; gap: 2px; padding: 9px 0 0 7px; }
.search { width: 112px; height: 19px; border: 1px solid #ccc; display: flex; justify-content: space-between; align-items: center; padding: 0 5px 0 7px; color: #999; }
.tables { display: block; padding: 6px 0 3px 15px; color: #111; }
.fields li { height: 17.9px; display: flex; align-items: center; padding-left: 17px; color: #222; }
.fields em { width: 23.500px; font-size: 8.500px; color: #3b86ad; padding-left: 1px; padding-top: 1px; }
.fields svg { width: 23.500px; }
.it span { font-style: italic; }
.it .full { letter-spacing: -.05px; }
.measures { margin: 0 5px 0 13px; border-top: 1px solid #ddd; }
.measures li { padding-left: 4px; }
.cards { width: 141px; padding-left: 5px; flex: none; margin-top: -1px; }
.card { width: 131px; border: 1px solid #d9d9d9; border-top-color: #e3e3e3; background: #fafafa; margin-bottom: 5px; padding: 4px 5px; color: #444; }
.pages { height: 52px; margin-bottom: 6px; } .filters { height: 66px; }
.marks { height: 258px; padding: 0; }
.mtitle { height: 26px; padding: 4px 5px; border-bottom: 1px solid #ddd; }
.mrow { height: 27px; display: flex; align-items: center; padding: 3px 0 0 9.500px; border-bottom: 1px solid #ddd; }
.mrow > svg:first-child { margin: -7px 9px 0 0; }
.mrow .tri { margin: -8px 0 0 2px; }
.sel b { color: #111; }
.mark-body { height: 149px; padding: 4px 5px; }
.marktype { width: 119px; height: 18px; border: 1px solid #ccc; display: flex; align-items: center; font-size: 9.500px; padding-left: 10px; gap: 5px; }
.dd { margin-left: auto; border-left: 1px solid #ddd; }
.shelf { display: grid; grid-template-columns: repeat(3, 36px); gap: 5px; column-gap: 5.500px; margin-top: 5px; }
.shelf div { height: 36px; border: 1px solid #d3d3d3; font-size: 9px; letter-spacing: 0; line-height: 12px; display: flex; flex-direction: column; align-items: center; padding-top: 4px; gap: 4px; }
.last { border-bottom: 0; }
.mrow.last { border-top: 1px solid #ddd; }
.view { width: 899px; flex: none; }
.rowshelf { height: 23px; border: 1px solid #d9d9d9; border-top-color: #e6e6e6; background: #fafafa; display: flex; align-items: center; gap: 2px; }
.rows { margin-top: 5px; height: 24px; margin-bottom: 5px; }
.sh { width: 105px; height: 100%; border-right: 1px solid #ddd; display: flex; align-items: center; gap: 5px; padding-left: 5px; }
.pill { width: 125.500px; height: 17px; border-radius: 9px; background: #03ad7c; color: #fff; display: flex; align-items: center; justify-content: space-between; padding: 0 9px; }
.sheet { height: 524px; border: 1px solid #ccc; background: #fff; }
h1 { font: 400 17px/24px "Open Sans", sans-serif; letter-spacing: .1px; color: #444; padding: 9px 0 0 8px; }
.chart { display: flex; padding-top: 7px; margin-left: 7px; }
.ylabels { width: 85px; font: 10.500px/17px "Open Sans", sans-serif; letter-spacing: .22px; color: #777; text-align: right; padding-right: 4px; flex: none; }
.ag { height: 18px; border-bottom: 1px solid #ddd; display: flex; justify-content: flex-end; align-items: center; gap: 3px; padding-right: 18px; margin-right: -4px; color: #444; letter-spacing: -.2px; }
.ylabels p { height: 17px; }
.ticks { font: 10.500px "Open Sans", sans-serif; letter-spacing: .15px; fill: #777; }
.axt { font: 600 10.500px "Open Sans", "Noto Sans CJK SC", sans-serif; fill: #444; }
.tabs { height: 26px; flex: none; background: #e5e5e5; border-top: 1px solid #dcdcdc; display: flex; }
.tabs > div { border-right: 1px solid #d0d0d0; display: flex; align-items: center; }
.ds { width: 111px; padding-left: 8px; gap: 3px; color: #555; }
.cur { width: 50px; background: #fafafa; justify-content: center; color: #444; letter-spacing: 0; }
.nt { width: 27px; justify-content: center; padding-top: 1px; }
.status { height: 18px; flex: none; border-top: 1px solid #ccc; background: linear-gradient(#e9e9e9, #d8d8d8); display: flex; align-items: center; padding-left: 11px; gap: 14px; color: #222; font-size: 9.300px; letter-spacing: -.16px; }
.status svg { margin-left: auto; }
.dockwrap { height: 57px; padding: 7px 0 0 30px; background: linear-gradient(#303033, #1c1b1f) no-repeat 0 0 / 1224px 4px; }
.dock { width: 1164px; height: 45px; border: 1px solid #3d2a57; border-radius: 11px; background: #2112387a; display: flex; padding: 6px 0 0 2px; }
.app { width: 37.460px; height: 36px; flex: none; position: relative; display: flex; justify-content: center; letter-spacing: 0; }
.app svg { width: 29px; height: 29px; }
.app text { font-family: Inter, "Noto Sans CJK SC", sans-serif; }
.app text.serif { font-family: "Liberation Serif", serif; }
.run::after { content: ""; position: absolute; left: 17px; top: 33px; width: 3px; height: 3px; border-radius: 50%; background: #c9b3e0; }
.badge { position: absolute; right: 0; top: -4px; width: 14px; height: 14px; border-radius: 50%; background: #f23b35; color: #fff; font: 8.500px/14px Inter, sans-serif; text-align: center; }
.dock hr { width: 1px; height: 33px; border: 0; background: #6a4a85; margin: -1px 8.300px 0; flex: none; }
.dock .second { margin-right: 6.800px; }
.dialog { position: absolute; left: 420px; top: 102px; width: 384px; height: 551px; background: #fff; border: 1px solid #bbb; box-shadow: 0 5px 16px rgba(0,0,0,.35); color: #444; }
.dhead { height: 35px; background: #f4f4f4; display: flex; justify-content: space-between; align-items: center; padding: 0 11px 0 15px; letter-spacing: 0; }
.dhead span { letter-spacing: .16px; }
.dnav { height: 35px; background: #f4f4f4; display: flex; text-align: center; line-height: 35px; color: #666; }
.dnav span { flex: 1; }
.dnav .on { border-bottom: 3px solid #5c5c5c; letter-spacing: -.05px; }
.dbody { padding: 13px 15px 0; }
h2 { font-size: 11px; line-height: 17px; letter-spacing: -.05px; color: #333; }
.split { display: flex; justify-content: space-between; margin-top: 7.500px; }
.opts { padding-left: 9px; }
label { height: 17px; display: flex; align-items: center; gap: 4.500px; }
.long { letter-spacing: -.28px; }
.zero { margin-right: 10px; }
.radio { width: 13px; height: 13px; border: 1px solid #777; border-radius: 50%; display: grid; place-items: center; }
.radio.on::after { content: ""; width: 6px; height: 6px; border-radius: 50%; background: #555; }
.check { border: 1px solid #777; fill: none; stroke: #333; stroke-width: 1.300; }
.check path { transform: translate(-1px, -1px); }
.focus { border-color: #4a9be0; box-shadow: 0 0 2px 1px #7fc0f5; }
.pair { display: grid; grid-template-columns: 163px 163px; gap: 15.500px; margin: 9px 0 0 10px; color: #b5b5b5; }
.pair div { height: 21px; border-bottom: 1px solid #c6c6c6; padding: 1px 4px 0 7px; display: flex; justify-content: space-between; align-items: center; }
.pair.sel { margin-top: 10.500px; }
.scale { margin-top: 30.500px; margin-bottom: 7.500px; }
.sub { display: flex; gap: 24px; margin: 6px 0 0 27px; color: #b5b5b5; }
.sub .radio { border-color: #bbb; } .sub .radio::after { background: #bbb; }
.at { margin-top: 12.500px; margin-bottom: 2px; }
.lab { padding-left: 10px; }
.inp { margin-left: 10px; height: 21px; width: 341px; border-bottom: 1px solid #bbb; padding: 3px 0 0 7px; letter-spacing: -.3px; }
.lab.dim { margin: 9.500px 0 1.500px; }
.dim { color: #b5b5b5; letter-spacing: -.1px; }
.last .inp { width: 259px; padding-top: 1px; }
.dbody .last { display: flex; justify-content: space-between; }
.last label { margin-top: 10px; }
.reset { display: flex; align-items: center; gap: 4px; margin: 46.500px 0 0 13px; color: #444; letter-spacing: 0; }
```
